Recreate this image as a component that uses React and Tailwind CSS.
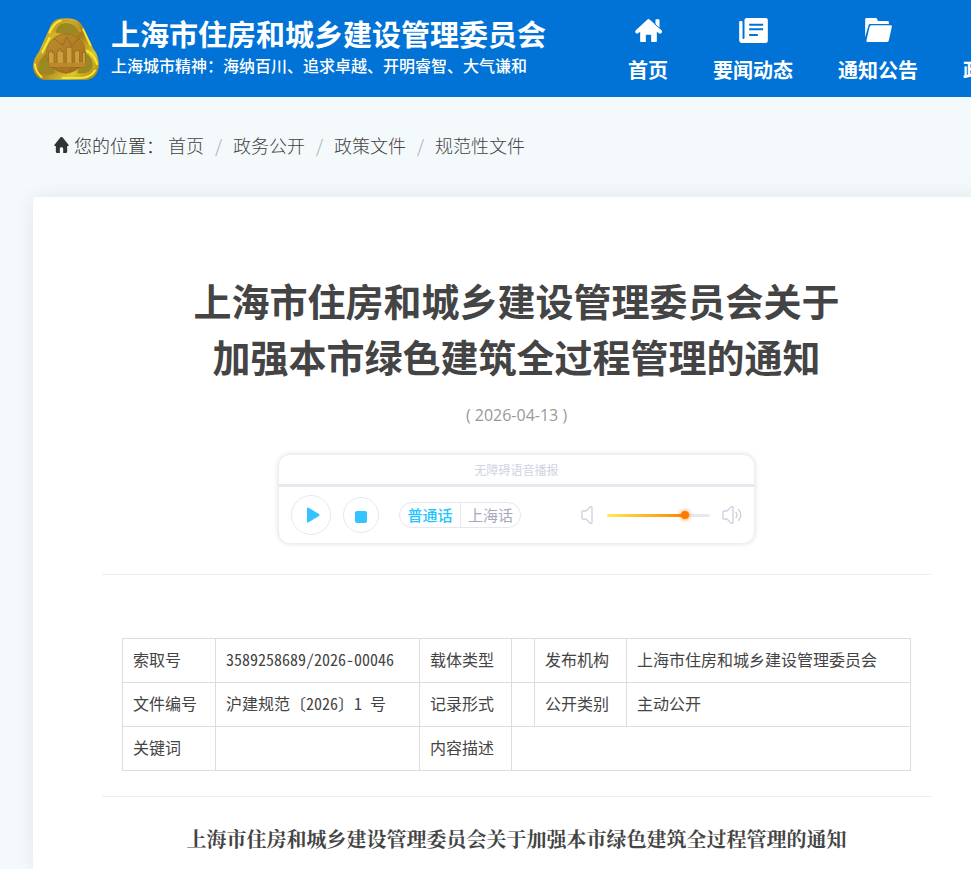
import { useState } from "react";

const NAV_ITEMS = [
    { label: "首页", icon: HomeIcon },
    { label: "要闻动态", icon: NewsIcon },
    { label: "通知公告", icon: FolderIcon },
    { label: "政务公开", icon: FolderIcon },
];

const CRUMBS = ["首页", "政务公开", "政策文件", "规范性文件"];

function HomeIcon() {
    return (
        <svg viewBox="0 0 80 69" className="h-[23px] w-[27px]" fill="currentColor" aria-hidden="true">
            <path d="M36 2q4-4 8 0l17 15V3q0-2 2-2h8q2 0 2 2v25l6 6q3 4 0 8-4 4-9 0l-5-4v29q0 2-2 2H48V49q0-2-2-2H34q-2 0-2 2v20H17q-2 0-2-2V38l-5 4q-5 3-8 0-4-4 0-8z" />
            <path d="M58 14l17 15" stroke="#0273d6" strokeWidth="3" fill="none" />
        </svg>
    );
}

function NewsIcon() {
    return (
        <svg viewBox="0 0 86 75" className="h-[25px] w-[29px]" fill="currentColor" aria-hidden="true">
            <path d="M22 0h58q6 0 6 6v62q0 7-7 7H9q-9 0-9-9V12q0-3 3-3h4q3 0 3 3v48q0 3 3 3t3-3V6q0-6 6-6z" />
            <path d="M30 20h42M30 34h42M30 51h26" stroke="#0273d6" strokeWidth="6" fill="none" />
        </svg>
    );
}

function FolderIcon() {
    return (
        <svg viewBox="0 0 80 72" className="h-6 w-[27px]" fill="currentColor" aria-hidden="true">
            <path d="M4 0h28q3 0 4 3l2 6h30q3 0 3 3v6H15q-4 0-5 4L0 58V4q0-4 4-4z" />
            <path d="M19 22h58q4 0 3 4l-9 41q-1 5-5 5H7q-4 0-3-5l9-40q1-5 6-5z" />
        </svg>
    );
}

function CrumbHomeIcon() {
    return (
        <svg viewBox="0 0 44 48" className="h-4 w-[15px]" fill="currentColor" aria-hidden="true">
            <path d="M19 1q3-2 6 0l18 22q2 4-2 4h-2v17q0 4-4 4h-8V35q0-4-5-4t-5 4v13H9q-4 0-4-4V27H3q-4 0-2-4z" />
        </svg>
    );
}

function Emblem() {
    return (
        <svg viewBox="0 0 200 187" className="h-[62px] w-[66px]" aria-hidden="true">
            <defs>
                <linearGradient id="rim" x1="0" y1="0" x2="1" y2="1">
                    <stop offset="0" stopColor="#a87f20" />
                    <stop offset="0.3" stopColor="#d6b32a" />
                    <stop offset="0.5" stopColor="#a9791c" />
                    <stop offset="0.75" stopColor="#dfc629" />
                    <stop offset="1" stopColor="#a37a16" />
                </linearGradient>
                <linearGradient id="disc" x1="0" y1="0" x2="1" y2="1">
                    <stop offset="0" stopColor="#bd8d30" />
                    <stop offset="1" stopColor="#a8701c" />
                </linearGradient>
            </defs>
            <path d="M74 3q26-6 52 0 16 6 26 24l32 68q18 22 15 54-5 32-33 38H30Q4 180 0 150q-1-24 18-48l33-74Q58 8 74 3z" fill="url(#rim)" />
            <path d="M68 44q4-29 33-29t38 32l-35 2zM18 140q3-20 24-34l26 60q-46 18-50-26zM158 104q26 16 23 42-8 28-48 20z" fill="#9b8823" />
            <path d="M64 42Q70 10 102 8q30 0 42 34" fill="none" stroke="#c9a027" strokeWidth="6" />
            <path d="M50 44q12-30 34-37M152 34l22 48M28 104l22-44M152 95q34 10 42 44M90 181h60q26-2 38-22M6 140q2 24 20 38" fill="none" stroke="#f4ea35" strokeWidth="6" strokeLinecap="round" />
            <circle cx="100" cy="107" r="59" fill="url(#disc)" stroke="#8f6a1e" strokeWidth="2" />
            <path d="M64 62l27 20 11-25 15 26 23-21M58 147l42 20 42-20M81 148l19 19 21-19" fill="none" stroke="#976a20" strokeWidth="3" />
            <path d="M47 148v-46h6v-5h5v8h6v30h9v-36h6v-6h6v8h8v34h8V88h17v46h8V99h15v34h9v-29h9v44z" fill="#cfa03a" stroke="#8a6020" strokeWidth="2" />
            <path d="M47 135h112v13H47z" fill="#bd882a" />
        </svg>
    );
}

function SpeakerIcon({ waves }) {
    return (
        <svg
            viewBox="0 0 20 20"
            className="size-5 shrink-0"
            fill="none"
            stroke="#d0d2de"
            strokeWidth="1.4"
            strokeLinecap="round"
            strokeLinejoin="round"
            aria-hidden="true"
        >
            <path d="M1 7q0-1 1-1h3l4-4q2-1 2 1v14q0 2-2 1l-4-4H2q-1 0-1-1z" />
            {waves && <path d="M14 7.500q2 2.500 0 5M16.500 4.500q4.500 5.500 0 11" />}
        </svg>
    );
}

function Header() {
    return (
        <header className="flex h-[97px] bg-[#0273d6] px-[33px] text-white">
            <a href="#home" className="flex shrink-0 items-center gap-3">
                <Emblem />
                <span className="flex flex-col pb-1 whitespace-nowrap">
                    <span className="text-[29px] leading-9 font-bold">上海市住房和城乡建设管理委员会</span>
                    <span className="text-base leading-7 font-medium">上海城市精神：海纳百川、追求卓越、开明睿智、大气谦和</span>
                </span>
            </a>
            <nav className="ml-[82px] flex gap-[45px]">
                {NAV_ITEMS.map(({ label, icon: Icon }) => (
                    <a key={label} href="#nav" className="flex shrink-0 flex-col items-center pt-4">
                        <span className="flex h-7 items-center">
                            <Icon />
                        </span>
                        <span className="mt-3 text-xl leading-7 font-bold">{label}</span>
                    </a>
                ))}
            </nav>
        </header>
    );
}

function Breadcrumb() {
    return (
        <nav className="flex h-[100px] items-center px-[54px] pb-1 text-lg font-light text-[#333]" aria-label="您的位置">
            <CrumbHomeIcon />
            <span className="mr-1 ml-[5px]">您的位置：</span>
            <ol className="flex">
                {CRUMBS.map((crumb, i) => (
                    <li key={crumb} className="flex">
                        {i > 0 && <span className="w-[29px] text-center text-[#aaa]">/</span>}
                        <a href="#crumb" className="text-[#444]">{crumb}</a>
                    </li>
                ))}
            </ol>
        </nav>
    );
}

function AudioPlayer() {
    const [lang, setLang] = useState("普通话");
    const [volume, setVolume] = useState(78);

    return (
        <section className="mx-auto mt-[27px] w-[477px] overflow-hidden rounded-xl border border-[#eee] bg-white shadow-[0_0_5px_rgba(0,0,0,0.12)]">
            <p className="h-[29px] text-center text-xs leading-[30px] text-[#d0d3e2]">无障碍语音播报</p>
            <div className="h-[3px] bg-[#e6e9f1]" />
            <div className="flex h-14 items-center pr-3 pl-3">
                <button
                    type="button"
                    aria-label="播放"
                    className="flex size-10 items-center justify-center rounded-full border border-[#e6e7f1]"
                >
                    <svg viewBox="0 0 14 16" className="ml-1 h-4 w-[14px]" fill="#33c3ff" aria-hidden="true">
                        <path d="M1 1q0-1 2 0l10 6q1 1 0 2L3 15q-2 1-2 0z" />
                    </svg>
                </button>
                <button
                    type="button"
                    aria-label="停止"
                    className="ml-3 flex size-9 items-center justify-center rounded-full border border-[#e6e7f1]"
                >
                    <span className="mt-1 size-3 rounded-xs bg-[#33c3ff]" />
                </button>
                <div className="ml-5 flex h-[26px] overflow-hidden rounded-full border border-[#e6e7f1] text-[15px] leading-6">
                    {["普通话", "上海话"].map((name) => (
                        <button
                            key={name}
                            type="button"
                            onClick={() => setLang(name)}
                            className={
                                "w-[60px] border-[#e6e7f1] last:border-l " +
                                (lang === name ? "font-medium text-[#22c4ff]" : "text-[#a5a8bd]")
                            }
                        >
                            {name}
                        </button>
                    ))}
                </div>
                <div className="ml-auto flex items-center">
                    <SpeakerIcon />
                    <input
                        type="range"
                        min="0"
                        max="100"
                        value={volume}
                        onChange={(e) => setVolume(Number(e.target.value))}
                        aria-label="音量"
                        style={{
                            backgroundImage: `linear-gradient(to right, #ffe957, #ff8400 ${volume - 2}%, #e6e9f1 ${volume - 2}%)`,
                        }}
                        className="mx-[6px] mr-3 h-[3px] w-[103px] appearance-none rounded-full [&::-webkit-slider-thumb]:size-2 [&::-webkit-slider-thumb]:appearance-none [&::-webkit-slider-thumb]:rounded-full [&::-webkit-slider-thumb]:bg-[#ff7a00] [&::-webkit-slider-thumb]:shadow-[0_0_4px_#ff7a00]"
                    />
                    <SpeakerIcon waves />
                </div>
            </div>
        </section>
    );
}

function DocumentTable() {
    return (
        <div className="px-5 pt-[63px] pb-[25px]">
            <table className="w-full table-fixed border-collapse font-['Noto_Sans_Mono_CJK_SC','Noto_Sans_CJK_SC',monospace] text-base leading-6 text-[#444] [&_td]:h-11 [&_td]:border [&_td]:border-[#ddd] [&_td]:px-[10px] [&_td]:pb-1 [&_td]:whitespace-nowrap [&_th]:h-11 [&_th]:border [&_th]:border-[#ddd] [&_th]:px-[10px] [&_th]:pb-1 [&_th]:text-left [&_th]:font-normal">
                <colgroup>
                    <col className="w-[93px]" />
                    <col className="w-[204px]" />
                    <col className="w-[92px]" />
                    <col className="w-[23px]" />
                    <col className="w-[92px]" />
                    <col />
                </colgroup>
                <tbody>
                    <tr>
                        <th scope="row">索取号</th>
                        <td>3589258689/2026-00046</td>
                        <th scope="row">载体类型</th>
                        <td />
                        <th scope="row">发布机构</th>
                        <td>上海市住房和城乡建设管理委员会</td>
                    </tr>
                    <tr>
                        <th scope="row">文件编号</th>
                        <td>沪建规范〔2026〕1 号</td>
                        <th scope="row">记录形式</th>
                        <td />
                        <th scope="row">公开类别</th>
                        <td>主动公开</td>
                    </tr>
                    <tr>
                        <th scope="row">关键词</th>
                        <td />
                        <th scope="row">内容描述</th>
                        <td colSpan={3} />
                    </tr>
                </tbody>
            </table>
        </div>
    );
}

export default function App() {
    return (
        <div className="overflow-x-hidden bg-[#f4f9fb] font-['Noto_Sans_CJK_SC',sans-serif]">
            <div className="flex min-h-screen min-w-[1033px] flex-col">
                <Header />
                <Breadcrumb />
                <main className="mx-[33px] flex-1 rounded-t-sm bg-white px-[69px] pt-[75px] shadow-[0_0_20px_rgba(0,0,0,0.08)]">
                    <h1 className="text-center text-[38px] leading-14 font-bold text-[#444]">
                        上海市住房和城乡建设管理委员会关于
                        <br />
                        加强本市绿色建筑全过程管理的通知
                    </h1>
                    <p className="mt-[19px] text-center font-['Open_Sans',sans-serif] text-base leading-6 text-[#999]">
                        ( 2026-04-13 )
                    </p>
                    <AudioPlayer />
                    <hr className="mt-[30px] border-[#eee]" />
                    <DocumentTable />
                    <hr className="border-[#eee]" />
                    <h2 className="mt-[26px] pb-3 text-center font-['Noto_Serif_CJK_SC','Noto_Sans_CJK_SC',serif] text-xl leading-8 font-bold text-[#444]">
                        上海市住房和城乡建设管理委员会关于加强本市绿色建筑全过程管理的通知
                    </h2>
                </main>
            </div>
        </div>
    );
}
